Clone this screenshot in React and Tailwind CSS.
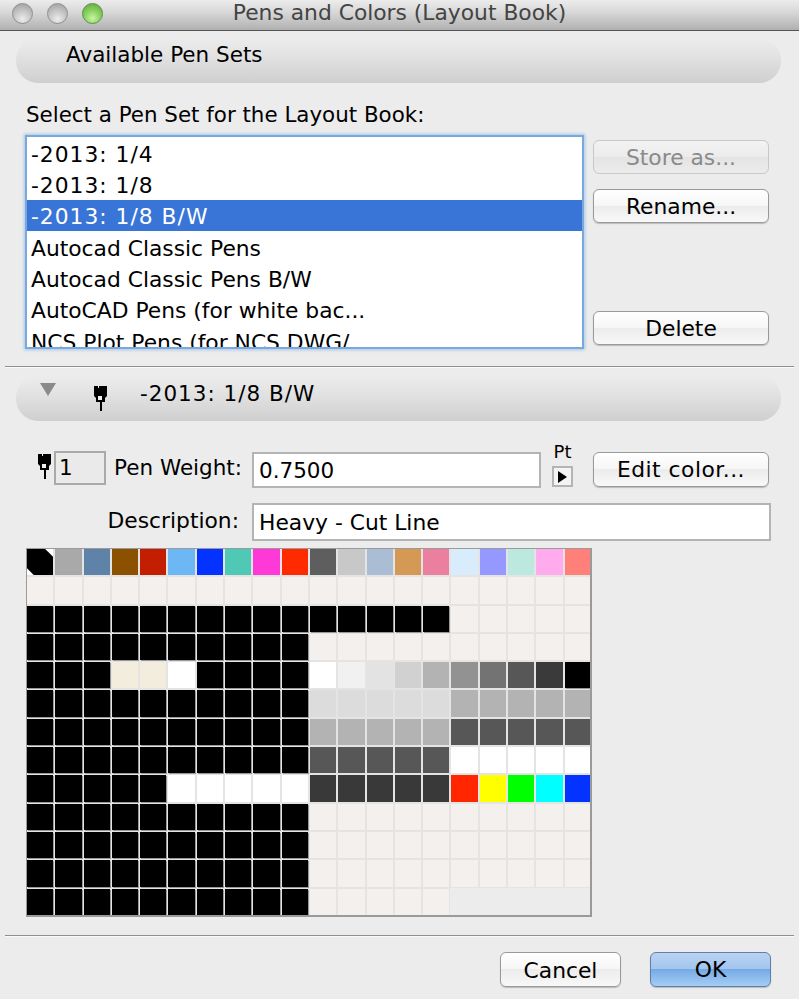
const font = "font-['DejaVu_Sans',sans-serif]";

const penSets = [
  "-2013: 1/4",
  "-2013: 1/8",
  "-2013: 1/8 B/W",
  "Autocad Classic Pens",
  "Autocad Classic Pens B/W",
  "AutoCAD Pens (for white bac...",
  "NCS Plot Pens (for NCS DWG/",
];

const K = "#000000";
const B = "#f4f0ed";
const W = "#ffffff";
const E = "empty";

function rep(color, n) {
  return Array(n).fill(color);
}

const rows = [
  ["swatch", "#a9a9a9", "#5f82a8", "#8b5000", "#c41e00", "#6db8f4", "#0433ff", "#4fc9b5", "#ff38d8", "#ff2a00", "#5e5e5e", "#c8c8c8", "#abbdd4", "#d49a55", "#eb7fa0", "#d9ecfb", "#9599ff", "#bce8e0", "#ffabee", "#ff7f79"],
  rep(B, 20),
  [...rep(K, 15), ...rep(B, 5)],
  [...rep(K, 10), ...rep(B, 10)],
  [K, K, K, "#f2eddc", "#f2eddc", W, K, K, K, K, W, "#f1f1f1", "#e3e3e3", "#d1d1d1", "#b3b3b3", "#929292", "#737373", "#575757", "#3a3a3a", K],
  [...rep(K, 10), ...rep("#dcdcdc", 5), ...rep("#b3b3b3", 5)],
  [...rep(K, 10), ...rep("#b3b3b3", 5), ...rep("#575757", 5)],
  [...rep(K, 10), ...rep("#575757", 5), ...rep(W, 5)],
  [...rep(K, 5), ...rep(W, 5), ...rep("#393939", 5), "#ff2600", "#ffff00", "#00ff00", "#00ffff", "#0433ff"],
  [...rep(K, 10), ...rep(B, 10)],
  [...rep(K, 10), ...rep(B, 10)],
  [...rep(K, 10), ...rep(B, 10)],
  [...rep(K, 10), ...rep(B, 5), ...rep(E, 5)],
];

function PenIcon({ className }) {
  return (
    <svg viewBox="0 0 13 25" className={className}>
      <path d="M0 0h4v2h1V0h8v10l-2 2v4H8v9H6v-9H2v-4L0 10z" fill="#000" />
      <rect x="4" y="10" width="4" height="4" fill="#eee" />
    </svg>
  );
}

function Light({ green }) {
  return (
    <div
      className={
        green
          ? "w-[21px] h-[21px] rounded-full border border-[#5d8f45] bg-[radial-gradient(circle_at_50%_75%,#c9f5a0_0%,#84cf5c_50%,#5da53c_100%)]"
          : "w-[21px] h-[21px] rounded-full border border-[#8e8e8e] bg-[radial-gradient(circle_at_50%_80%,#ececec_0%,#c4c4c4_50%,#9a9a9a_100%)]"
      }
    />
  );
}

function Button({ children, disabled, className = "" }) {
  return (
    <div
      className={`w-[176px] flex items-center justify-center rounded-[6px] border text-[21.8px] leading-none pt-[2px] ${
        disabled
          ? "border-[#c8c8c8] text-[#8a8a8a] bg-[linear-gradient(#f2f2f2,#ececec_50%,#e4e4e4_50%,#ececec)]"
          : "border-[#9a9a9a] text-black bg-[linear-gradient(#ffffff,#f6f6f6_50%,#ececec_50%,#f8f8f8)] shadow-[0_1px_1px_#bbb]"
      } ${className}`}
    >
      {children}
    </div>
  );
}

function Band({ children, className = "" }) {
  return (
    <div
      className={`ml-[16px] mr-[18px] h-[45px] rounded-[22px] bg-[linear-gradient(#ececec,#e2e2e2_40%,#cfcfcf)] flex items-start text-[21.5px] text-black ${className}`}
    >
      {children}
    </div>
  );
}

function Cell({ color }) {
  if (color === "empty") return <div className="bg-[#ececec] -m-[1px]" />;
  if (color === "swatch") {
    return (
      <svg viewBox="0 0 26 26" preserveAspectRatio="none" className="w-full h-full block bg-black">
        <polygon points="18,0 26,0 26,8" fill="#fff" />
        <polygon points="0,19 0,26 7,26" fill="#fff" />
      </svg>
    );
  }
  return (
    <div
      className={color === K ? "shadow-[1px_1px_0_#999]" : ""}
      style={{ backgroundColor: color }}
    />
  );
}

export default function App() {
  return (
    <div className={`w-[799px] h-[999px] overflow-hidden bg-[#ececec] flex flex-col ${font}`}>
      {/* title bar */}
      <div className="h-[31px] shrink-0 flex items-center relative border-b border-[#555] bg-[linear-gradient(#ececec,#d8d8d8_40%,#b0b0b0)]">
        <div className="flex gap-[14px] ml-[12px] mt-[-3px]">
          <Light />
          <Light />
          <Light green />
        </div>
        <div className="absolute inset-x-0 top-0 text-center text-[21.8px] leading-[25px] text-[#444]">
          Pens and Colors (Layout Book)
        </div>
      </div>

      <Band className="mt-[7px] pl-[50px] pt-[4px]">
        <span className="leading-[26px]">Available Pen Sets</span>
      </Band>

      <div className="mt-[19px] ml-[26px] text-[21.4px] leading-[26px] text-black whitespace-nowrap">
        Select a Pen Set for the Layout Book:
      </div>

      {/* pen set list + buttons */}
      <div className="flex mt-[9px] ml-[27px]">
        <div className="w-[555px] h-[210px] overflow-hidden bg-white shadow-[0_0_0_2px_#7aa7dc,0_0_3px_3px_#a5c5e8] text-[21.8px] text-black">
          {penSets.map((name, i) => (
            <div
              key={name}
              className={`h-[31.3px] pl-[4px] whitespace-nowrap ${
                i === 2 ? "bg-[#3875d7] text-white leading-[33px]" : "leading-[35px]"
              } ${i < 3 ? "tracking-[1px]" : ""}`}
            >
              {name}
            </div>
          ))}
        </div>
        <div className="ml-[11px] mt-[3px] flex flex-col">
          <Button disabled className="h-[34px]">Store as...</Button>
          <Button className="h-[34px] mt-[15px]">Rename...</Button>
          <Button className="h-[34px] mt-[88px]">Delete</Button>
        </div>
      </div>

      <div className="mt-[19px] mx-[5px] h-[1px] shrink-0 bg-[#8e8e8e] shadow-[0_1px_0_#fafafa]" />

      <Band className="mt-[9px] pt-[3px] shrink-0">
        <div className="ml-[24px] mt-[4px] w-0 h-0 border-x-[8px] border-x-transparent border-t-[13px] border-t-[#8a8a8a]" />
        <PenIcon className="w-[13px] h-[25px] ml-[38px] mt-[7px]" />
        <span className="ml-[33px] mt-[2px] leading-[26px] tracking-[1px]">-2013: 1/8 B/W</span>
      </Band>

      {/* pen weight row */}
      <div className="flex items-start mt-[30px] text-[21.5px] text-black">
        <PenIcon className="w-[13px] h-[25px] ml-[38px] mt-[3px]" />
        <div className="ml-[3px] w-[52px] h-[34px] border-2 border-[#aaa] bg-[#eaeaea] pl-[3px] leading-[30px]">1</div>
        <div className="ml-[8px] w-[128px] leading-[34px] whitespace-nowrap">Pen Weight:</div>
        <div className="ml-[10px] w-[289px] h-[36px] mt-[1px] border-2 border-[#b4b4b4] bg-white pl-[5px] leading-[33px]">0.7500</div>
        <div className="ml-[11px] w-[21px] mt-[-9px] flex flex-col items-center">
          <div className="text-[18px] leading-[20px]">Pt</div>
          <div className="mt-[4px] w-[21px] h-[21px] border-2 border-[#b4b4b4] bg-[#f4f4f4] flex items-center justify-center">
            <div className="w-0 h-0 border-y-[6px] border-y-transparent border-l-[9px] border-l-black" />
          </div>
        </div>
        <Button className="h-[35px] ml-[20px] mt-[1px] !pt-0 tracking-[0.5px]">Edit color...</Button>
      </div>

      {/* description row */}
      <div className="flex items-start mt-[15px] text-[21.8px] text-black">
        <div className="w-[239px] text-right leading-[36px] whitespace-nowrap">Description:</div>
        <div className="ml-[13px] w-[519px] h-[38px] border-2 border-[#b4b4b4] bg-white pl-[5px] leading-[36px]">Heavy - Cut Line</div>
      </div>

      {/* colour grid */}
      <div className="mt-[7px] ml-[26px] w-[566px] h-[369px] shrink-0 border-t border-l border-r-2 border-b-2 border-[#9a9a9a] bg-[#e4e4e4] overflow-hidden">
        <div className="grid grid-cols-[repeat(20,26.3px)] grid-rows-[repeat(13,26.3px)] gap-[2px]">
          {rows.flat().map((c, i) => (
            <Cell key={i} color={c} />
          ))}
        </div>
      </div>

      <div className="mt-[18px] mx-[5px] h-[1px] shrink-0 bg-[#8e8e8e] shadow-[0_1px_0_#fafafa]" />

      {/* footer */}
      <div className="flex justify-end mt-[16px] pr-[28px] gap-[29px] text-black">
        <Button className="!w-[121px] h-[35px]">Cancel</Button>
        <div className="w-[121px] h-[35px] rounded-[6px] border border-[#5f7ea8] flex items-center justify-center text-[21.8px] pt-[2px] bg-[linear-gradient(#b9d2f2,#a3c4ee_50%,#76aae6_50%,#a4cdf4)] shadow-[0_1px_1px_#bbb]">
          OK
        </div>
      </div>
    </div>
  );
}
